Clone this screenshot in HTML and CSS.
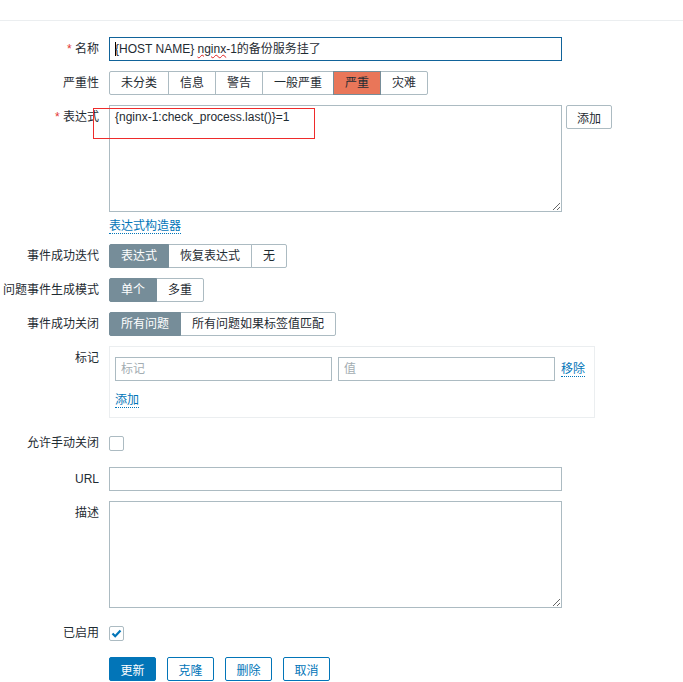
FILE: index.html
```
<!DOCTYPE html>
<html lang="zh-CN">
<head>
    <meta charset="UTF-8">
    <title>触发器</title>
    <link rel="stylesheet" href="styles.css">
</head>
<body>
    <div class="header"></div>
    <div class="form">
        <div class="row">
            <div class="row-label"><span class="required">*</span> 名称</div>
            <div class="text-box focused"><span class="caret"></span>{HOST NAME} <span class="misspelled">nginx</span>-1的备份服务挂了</div>
        </div>
        <div class="row">
            <div class="row-label">严重性</div>
            <div class="segmented">
                <span class="seg">未分类</span>
                <span class="seg">信息</span>
                <span class="seg">警告</span>
                <span class="seg">一般严重</span>
                <span class="seg high">严重</span>
                <span class="seg">灾难</span>
            </div>
        </div>
        <div class="row">
            <div class="row-label"><span class="required">*</span> 表达式</div>
            <div class="field">
                <div class="expr-line">
                    <textarea class="area">{nginx-1:check_process.last()}=1</textarea>
                    <button type="button" class="btn-alt">添加</button>
                </div>
                <a href="#" class="link builder-link">表达式构造器</a>
            </div>
        </div>
        <div class="row">
            <div class="row-label">事件成功迭代</div>
            <div class="segmented">
                <span class="seg active">表达式</span>
                <span class="seg">恢复表达式</span>
                <span class="seg">无</span>
            </div>
        </div>
        <div class="row">
            <div class="row-label">问题事件生成模式</div>
            <div class="segmented">
                <span class="seg active">单个</span>
                <span class="seg">多重</span>
            </div>
        </div>
        <div class="row">
            <div class="row-label">事件成功关闭</div>
            <div class="segmented">
                <span class="seg active">所有问题</span>
                <span class="seg">所有问题如果标签值匹配</span>
            </div>
        </div>
        <div class="row">
            <div class="row-label">标记</div>
            <div class="tag-box">
                <div class="tag-line">
                    <input type="text" class="tag-input" placeholder="标记">
                    <input type="text" class="tag-input" placeholder="值">
                    <a href="#" class="link">移除</a>
                </div>
                <a href="#" class="link tag-add">添加</a>
            </div>
        </div>
        <div class="row check-row">
            <div class="row-label">允许手动关闭</div>
            <span class="checkbox"></span>
        </div>
        <div class="row">
            <div class="row-label">URL</div>
            <input type="text" class="text-box">
        </div>
        <div class="row">
            <div class="row-label">描述</div>
            <textarea class="area"></textarea>
        </div>
        <div class="row check-row">
            <div class="row-label">已启用</div>
            <span class="checkbox">
                <svg width="13" height="13" viewBox="0 0 13 13"><path d="M2.5 6.5 L5.2 9.2 L10.5 3.6" fill="none" stroke="#0275b8" stroke-width="2.2"/></svg>
            </span>
        </div>
        <div class="row">
            <div class="row-label"></div>
            <div class="buttons">
                <button type="button" class="btn primary">更新</button>
                <button type="button" class="btn">克隆</button>
                <button type="button" class="btn">删除</button>
                <button type="button" class="btn">取消</button>
            </div>
        </div>
    </div>
    <div class="mark"></div>
</body>
</html>
```

FILE: styles.css
```
body {
    margin: 0;
    font-family: "Liberation Sans", Arial, "Noto Sans CJK SC", sans-serif;
    font-size: 12px;
    color: #1f2c33;
    background-color: #ffffff;
    position: relative;
}
.header {
    height: 20px;
    border-bottom: 1px solid #ebeef0;
}
.form {
    padding-top: 16px;
}
.row {
    display: flex;
    align-items: flex-start;
    margin-bottom: 10px;
}
.row-label {
    flex: 0 0 99px;
    margin-right: 10px;
    text-align: right;
    line-height: 24px;
    white-space: nowrap;
}
.required {
    color: #e33734;
}
.text-box {
    width: 453px;
    height: 24px;
    box-sizing: border-box;
    border: 1px solid #acbbc2;
    padding: 0 5px;
    line-height: 22px;
    font-family: inherit;
    font-size: 12px;
    color: #1f2c33;
    white-space: nowrap;
}
.text-box.focused {
    border-color: #11639a;
}
.caret {
    display: inline-block;
    width: 0;
    height: 14px;
    border-left: 1px solid #000;
    vertical-align: -3px;
    margin-right: -1px;
}
.misspelled {
    text-decoration: underline wavy #e02424;
    text-decoration-thickness: 1px;
}
.segmented {
    display: flex;
}
.seg {
    height: 24px;
    box-sizing: border-box;
    line-height: 22px;
    padding: 0 11px;
    border: 1px solid #acbbc2;
    margin-left: -1px;
    background-color: #ffffff;
}
.seg:first-child {
    margin-left: 0;
    border-radius: 2px 0 0 2px;
}
.seg:last-child {
    border-radius: 0 2px 2px 0;
}
.seg.active {
    background-color: #768d99;
    border-color: #768d99;
    color: #ffffff;
    position: relative;
}
.seg.high {
    background-color: #e97659;
    border-color: #768d99;
    position: relative;
}
.field {
    display: flex;
    flex-direction: column;
    align-items: flex-start;
}
.expr-line {
    display: flex;
    align-items: flex-start;
}
.area {
    width: 453px;
    height: 107px;
    box-sizing: border-box;
    border: 1px solid #acbbc2;
    padding: 4px 5px;
    margin: 0;
    font-family: inherit;
    font-size: 12px;
    line-height: 14px;
    color: #1f2c33;
    display: block;
}
.btn-alt {
    margin-left: 4px;
    width: 46px;
    height: 24px;
    padding: 0;
    border: 1px solid #acbbc2;
    border-radius: 2px;
    background-color: #ffffff;
    font-family: inherit;
    font-size: 12px;
    color: #1f2c33;
}
.link {
    color: #0275b8;
    text-decoration: none;
    border-bottom: 1px dotted #0275b8;
    line-height: 14px;
}
.builder-link {
    display: inline-block;
    margin-top: 7px;
}
.tag-box {
    width: 486px;
    box-sizing: border-box;
    border: 1px solid #ebeef0;
    padding: 10px 5px 9px 5px;
}
.tag-line {
    display: flex;
    align-items: center;
    gap: 6px;
}
.tag-input {
    width: 217px;
    height: 24px;
    box-sizing: border-box;
    border: 1px solid #acbbc2;
    padding: 0 5px;
    margin: 0;
    font-family: inherit;
    font-size: 12px;
}
.tag-input::placeholder {
    color: #a3adb2;
}
.tag-add {
    display: inline-block;
    margin-top: 12px;
}
.check-row {
    margin-top: 18px;
    margin-bottom: 16px;
}
.check-row .row-label {
    line-height: 15px;
}
.checkbox {
    width: 15px;
    height: 15px;
    box-sizing: border-box;
    border: 1px solid #acbbc2;
    border-radius: 2px;
    display: flex;
    align-items: center;
    justify-content: center;
}
.buttons {
    display: flex;
    gap: 11px;
}
.btn {
    width: 47px;
    height: 24px;
    padding: 0;
    border: 1px solid #0275b8;
    border-radius: 2px;
    background-color: #ffffff;
    color: #0275b8;
    font-family: inherit;
    font-size: 12px;
}
.btn.primary {
    background-color: #0275b8;
    color: #ffffff;
}
.mark {
    position: absolute;
    left: 93px;
    top: 108px;
    width: 222px;
    height: 31px;
    box-sizing: border-box;
    border: 1px solid #ee2b2b;
}
```
